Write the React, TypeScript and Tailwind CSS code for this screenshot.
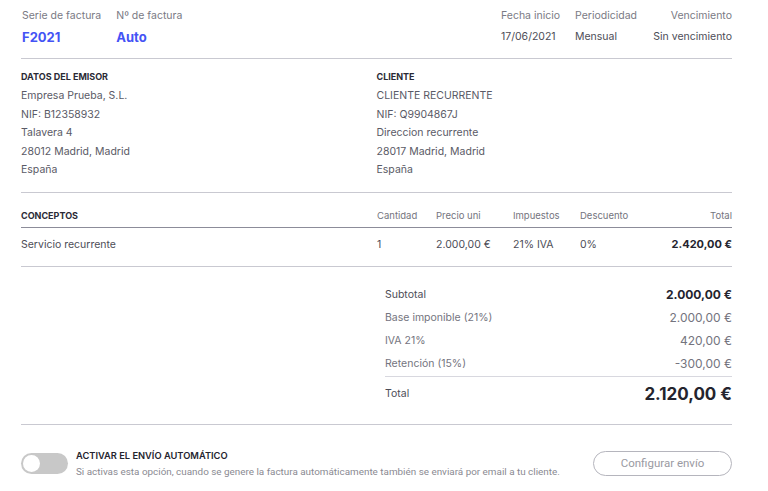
import { useState } from 'react'

const emisor = ['Empresa Prueba, S.L.', 'NIF: B12358932', 'Talavera 4', '28012 Madrid, Madrid', 'España']
const cliente = ['CLIENTE RECURRENTE', 'NIF: Q9904867J', 'Direccion recurrente', '28017 Madrid, Madrid', 'España']

const totales = [
  { label: 'Base imponible (21%)', value: '2.000,00 €' },
  { label: 'IVA 21%', value: '420,00 €' },
  { label: 'Retención (15%)', value: '-300,00 €' },
]

function DataBlock({ title, lines }: { title: string; lines: string[] }) {
  return (
    <div className="flex flex-col">
      <div className="text-[9px] font-bold uppercase text-[#2a2a35] leading-[12px] mb-[4px] mt-[2px]">{title}</div>
      {lines.map((l) => (
        <div key={l} className="text-[10.5px] leading-[18.5px] text-[#5a5a66]">{l}</div>
      ))}
    </div>
  )
}

export default function App() {
  const [auto, setAuto] = useState(false)

  return (
    <div className="w-[768px] h-[491px] bg-white font-['Inter',sans-serif] overflow-hidden">
      <div className="ml-[21px] w-[711px] pt-[9px]">
        {/* Cabecera */}
        <div className="flex justify-between pb-[13px] border-b border-[#c9c9d1]">
          <div className="flex gap-[15px] pl-[1px]">
            <div className="flex flex-col">
              <span className="text-[10.5px] leading-[14px] text-[#7a7a84]">Serie de factura</span>
              <span className="mt-[6px] text-[13px] leading-[16px] font-bold text-[#4453f5]">F2021</span>
            </div>
            <div className="flex flex-col">
              <span className="text-[10.5px] leading-[14px] text-[#7a7a84]">Nº de factura</span>
              <span className="mt-[6px] text-[13px] leading-[16px] font-bold text-[#4453f5]">Auto</span>
            </div>
          </div>
          <div className="flex w-[231px] text-[10.5px] leading-[14px]">
            <div className="w-[74px] flex flex-col">
              <span className="text-[#7a7a84]">Fecha inicio</span>
              <span className="mt-[7px] text-[#4d4d57]">17/06/2021</span>
            </div>
            <div className="w-[78px] flex flex-col">
              <span className="text-[#7a7a84]">Periodicidad</span>
              <span className="mt-[7px] text-[#4d4d57]">Mensual</span>
            </div>
            <div className="flex-1 flex flex-col items-end">
              <span className="text-[#7a7a84]">Vencimiento</span>
              <span className="mt-[7px] text-[#4d4d57]">Sin vencimiento</span>
            </div>
          </div>
        </div>

        {/* Emisor / Cliente */}
        <div className="grid grid-cols-2 pt-[10px] pb-[12px] border-b border-[#c9c9d1]">
          <DataBlock title="Datos del emisor" lines={emisor} />
          <DataBlock title="Cliente" lines={cliente} />
        </div>

        {/* Conceptos */}
        <div className="pt-[17px]">
          <div className="flex items-end pb-[5px] border-b border-[#8c8c99] text-[9.5px] leading-[12px] text-[#74747e]">
            <div className="w-[356px] text-[9px] font-bold text-[#2a2a35]">CONCEPTOS</div>
            <div className="w-[59px]">Cantidad</div>
            <div className="w-[77px]">Precio uni</div>
            <div className="w-[67px]">Impuestos</div>
            <div className="w-[70px]">Descuento</div>
            <div className="flex-1 text-right">Total</div>
          </div>
          <div className="flex items-center h-[39px] pb-[4px] border-b border-[#c9c9d1] text-[10.5px] text-[#4d4d57]">
            <div className="w-[356px]">Servicio recurrente</div>
            <div className="w-[59px]">1</div>
            <div className="w-[77px]">2.000,00 €</div>
            <div className="w-[67px]">21% IVA</div>
            <div className="w-[70px]">0%</div>
            <div className="flex-1 text-right font-bold text-[11px] text-[#24242e]">2.420,00 €</div>
          </div>
        </div>

        {/* Totales */}
        <div className="flex justify-end pt-[21px] pb-[18px] border-b border-[#c9c9d1]">
          <div className="w-[347px]">
            <div className="flex justify-between text-[10.5px] leading-[14px] text-[#4d4d57]">
              <span>Subtotal</span>
              <span className="font-bold text-[12px] text-[#24242e]">2.000,00 €</span>
            </div>
            {totales.map((t) => (
              <div key={t.label} className="flex justify-between mt-[9px] text-[10.5px] leading-[14px] text-[#74747e]">
                <span>{t.label}</span>
                <span className="text-[12px]">{t.value}</span>
              </div>
            ))}
            <div className="mt-[5px] border-t border-[#d8d8df] pt-[5px] flex justify-between items-center">
              <span className="text-[10.5px] text-[#4d4d57]">Total</span>
              <span className="text-[17px] leading-[24px] font-bold text-[#24242e]">2.120,00 €</span>
            </div>
          </div>
        </div>

        {/* Envío automático */}
        <div className="flex items-center justify-between pt-[25px]">
          <div className="flex items-center gap-[8px]">
            <button
              type="button"
              onClick={() => setAuto(!auto)}
              className={`w-[47px] h-[21px] rounded-full p-[2px] flex ${auto ? 'bg-[#4453f5] justify-end' : 'bg-[#c8c8c8] justify-start'}`}
              aria-label="Activar el envío automático"
            >
              <span className="w-[17px] h-[17px] rounded-full bg-white" />
            </button>
            <div className="flex flex-col">
              <span className="text-[9.3px] leading-[12px] font-semibold text-[#24242e]">ACTIVAR EL ENVÍO AUTOMÁTICO</span>
              <span className="mt-[4px] font-['Roboto',sans-serif] text-[9.9px] leading-[12px] text-[#8a8a92]">
                Si activas esta opción, cuando se genere la factura automáticamente también se enviará por email a tu cliente.
              </span>
            </div>
          </div>
          <button
            type="button"
            className="w-[139px] h-[25px] rounded-full border border-[#b5b5bd] font-['Roboto',sans-serif] text-[11.5px] text-[#9a9aa2]"
          >
            Configurar envío
          </button>
        </div>
      </div>
    </div>
  )
}
